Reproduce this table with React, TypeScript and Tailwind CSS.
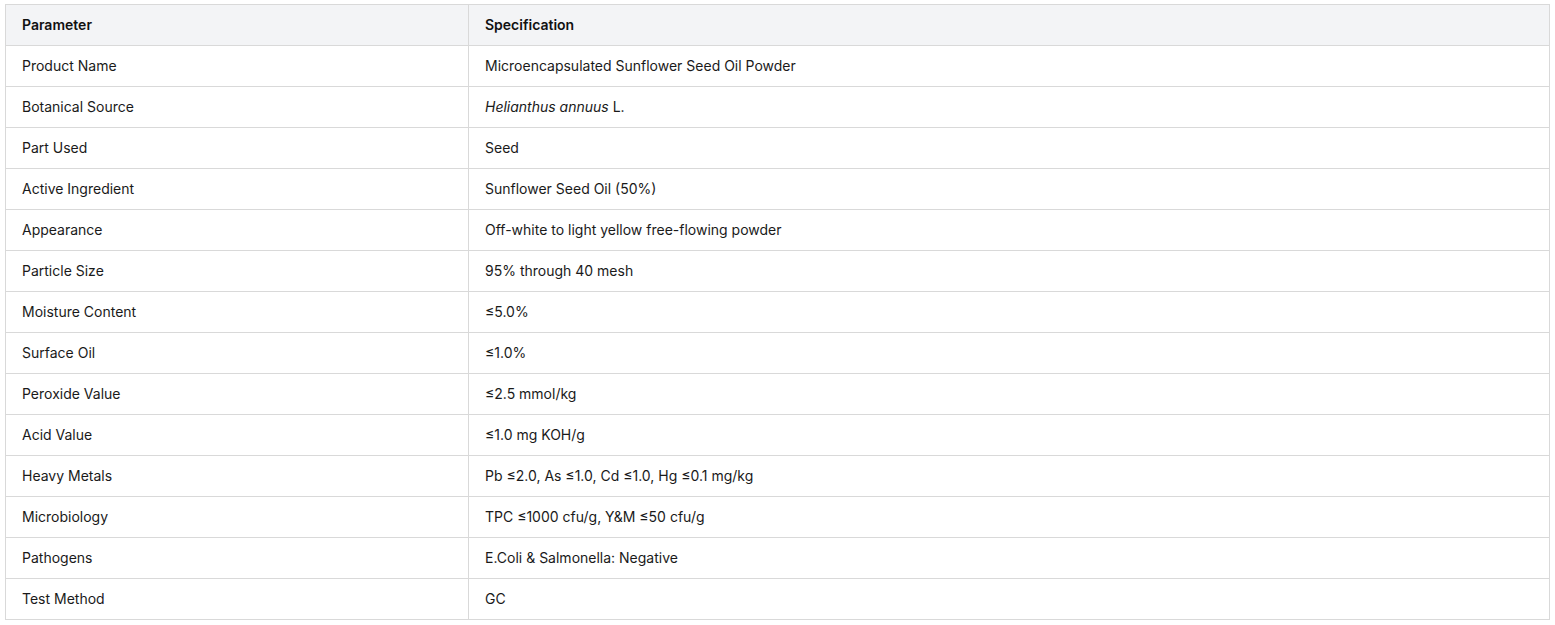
import React from 'react'

const rows: [string, React.ReactNode][] = [
  ['Product Name', 'Microencapsulated Sunflower Seed Oil Powder'],
  ['Botanical Source', <><em>Helianthus annuus</em> L.</>],
  ['Part Used', 'Seed'],
  ['Active Ingredient', 'Sunflower Seed Oil (50%)'],
  ['Appearance', 'Off-white to light yellow free-flowing powder'],
  ['Particle Size', '95% through 40 mesh'],
  ['Moisture Content', '≤5.0%'],
  ['Surface Oil', '≤1.0%'],
  ['Peroxide Value', '≤2.5 mmol/kg'],
  ['Acid Value', '≤1.0 mg KOH/g'],
  ['Heavy Metals', 'Pb ≤2.0, As ≤1.0, Cd ≤1.0, Hg ≤0.1 mg/kg'],
  ['Microbiology', 'TPC ≤1000 cfu/g, Y&M ≤50 cfu/g'],
  ['Pathogens', 'E.Coli & Salmonella: Negative'],
  ['Test Method', 'GC'],
]

const App = () => {
  return (
    <div className="bg-white min-h-screen pt-[4px] px-[5px] font-['Inter',sans-serif] text-[14px] text-[#1a1a1a]">
      <table className="w-full border-collapse border border-[#d9d9d9] table-fixed">
        <colgroup>
          <col className="w-[463px]" />
          <col />
        </colgroup>
        <thead>
          <tr className="bg-[#f3f4f6]">
            <th className="text-left font-semibold text-[#111] border border-[#d9d9d9] px-4 h-[41px] leading-5">Parameter</th>
            <th className="text-left font-semibold text-[#111] border border-[#d9d9d9] px-4 h-[41px] leading-5">Specification</th>
          </tr>
        </thead>
        <tbody>
          {rows.map(([k, v], i) => (
            <tr key={i}>
              <td className="border border-[#d9d9d9] px-4 h-[41px] leading-5">{k}</td>
              <td className="border border-[#d9d9d9] px-4 h-[41px] leading-5">{v}</td>
            </tr>
          ))}
        </tbody>
      </table>
    </div>
  )
}

export default App
